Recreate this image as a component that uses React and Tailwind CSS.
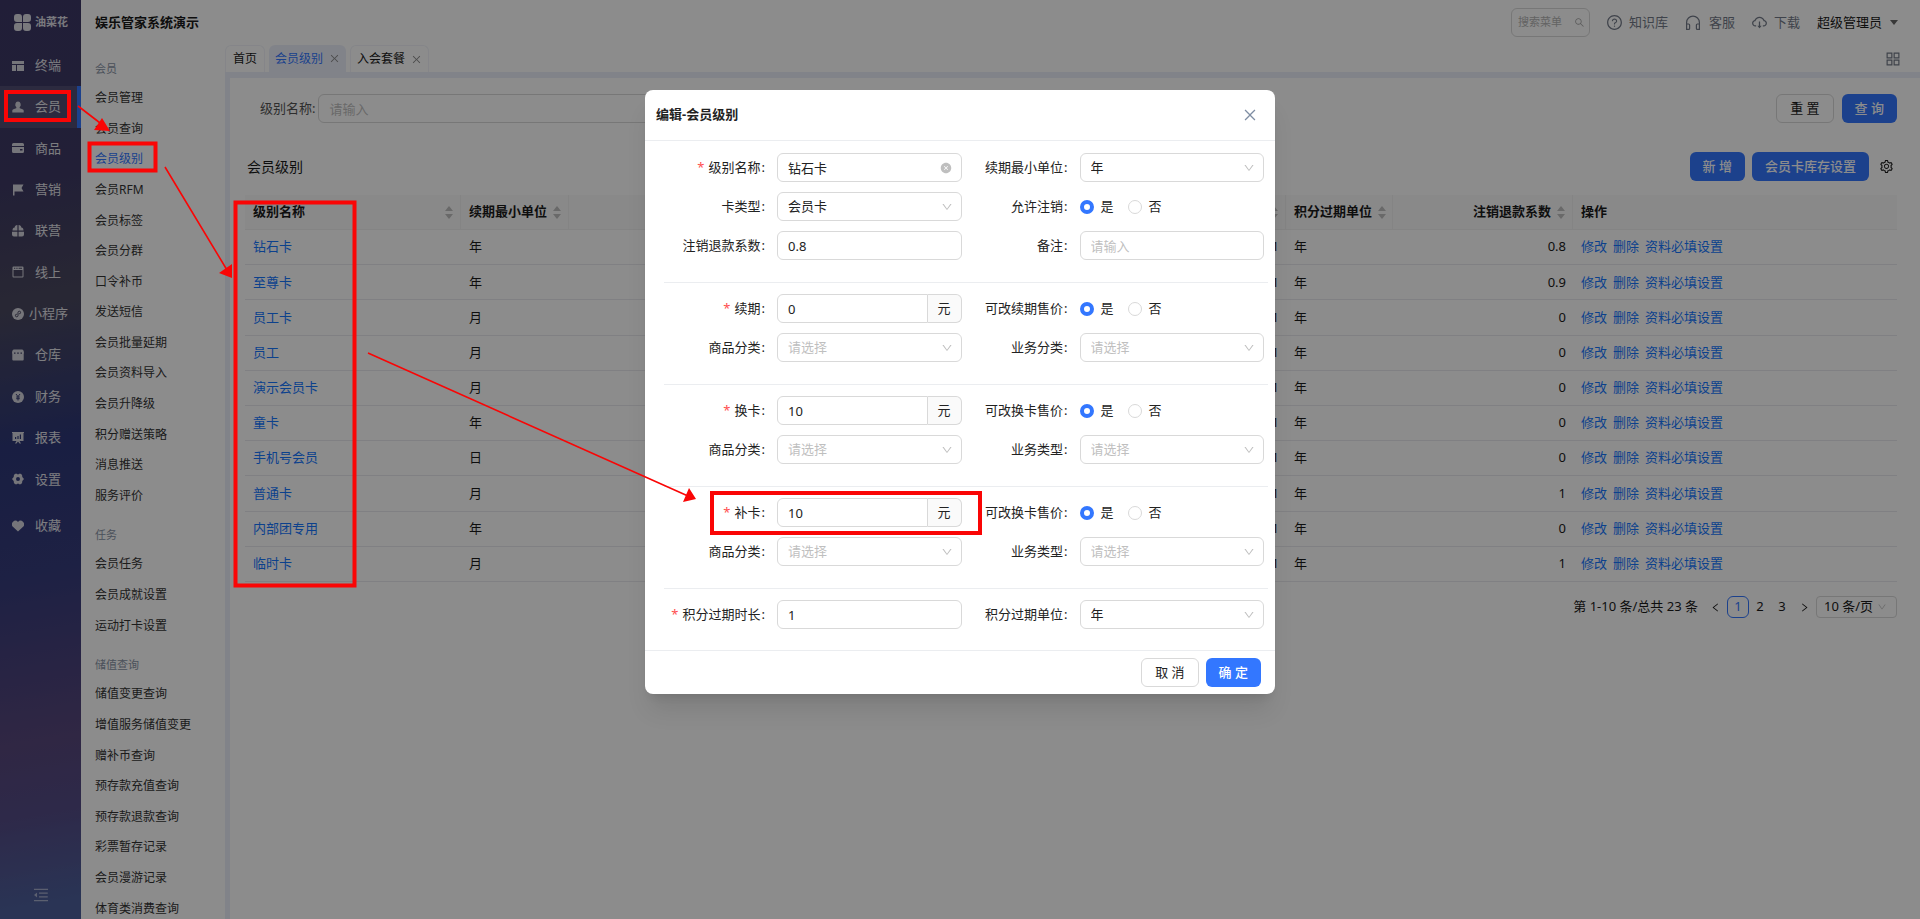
import {
  AiFillCloseCircle,
  AiOutlineAppstore,
  AiOutlineClose,
  AiOutlineCloudDownload,
  AiOutlineDown,
  AiOutlineLeft,
  AiOutlineMenuFold,
  AiOutlineQuestionCircle,
  AiOutlineRight,
  AiOutlineSearch,
  AiOutlineSetting,
} from "react-icons/ai";

const icons = {
  terminal: <path d="M0 1h12v3H0zM0 5h4v6H0zM5 5h7v6H5z" />,
  member: (
    <path d="M6 0.5a2.8 3.2 0 0 1 1.6 5.8l0.2 0.9c2 0.5 3.9 1.1 3.9 2.3v2H0.3v-2c0-1.2 1.9-1.8 3.9-2.3l0.2-0.9A2.8 3.2 0 0 1 6 0.5z" />
  ),
  goods: (
    <path
      fillRule="evenodd"
      d="M1.5 1h9A1.5 1.5 0 0 1 12 2.5V4H0V2.5A1.5 1.5 0 0 1 1.5 1zM0 5h12v4.5A1.5 1.5 0 0 1 10.5 11h-9A1.5 1.5 0 0 1 0 9.5zM8 7v1.5h2.5V7z"
    />
  ),
  flag: <path d="M1 0.5h10.5L9.5 4l2 3.5H2.5v4H1z" />,
  joint: (
    <path d="M5.4 5.5H0.5c0-1.8 0.8-3 2.2-3C2.7 1.2 3.8 0 5.4 0zM6.6 5.5h4.9c0-1.8-0.8-3-2.2-3C9.3 1.2 8.2 0 6.6 0zM0 6.700h5.400v4.800H2A2 2 0 0 1 0 9.500zM12 6.700H6.600v4.800H10a2 2 0 0 0 2-2z" />
  ),
  online: (
    <path
      fillRule="evenodd"
      d="M1.5 0.5h9a1 1 0 0 1 1 1v9a1 1 0 0 1-1 1h-9a1 1 0 0 1-1-1v-9a1 1 0 0 1 1-1zM1.5 4v6.500h9V4zM2 1.700v1h1.300v-1zM4.300 1.700v1h1.300v-1zM6.600 1.700v1h3.400v-1z"
    />
  ),
  mini: (
    <>
      <circle cx="6" cy="6" r="6" />
      <path
        d="M4.8 6.2A1.3 1.3 0 1 0 6 7.600V4.400A1.300 1.300 0 1 1 7.200 5.800"
        fill="none"
        stroke="#45435f"
        strokeWidth="1"
      />
    </>
  ),
  store: (
    <path
      fillRule="evenodd"
      d="M2 0.5h8c1.2 0 2 1.5 2 4H0c0-2.5 0.8-4 2-4zM0.300 4.500h11.400v6a1 1 0 0 1-1 1H1.300a1 1 0 0 1-1-1zM2 3.500v1.200h1.500V3.500zM5.200 3.500v1.200h1.600V3.500zM8.500 3.500v1.200H10V3.500z"
    />
  ),
  finance: (
    <>
      <circle cx="6" cy="6" r="6" />
      <path d="M4 3l2 2.6L8 3M6 5.600V9.500M4.200 6h3.600M4.200 7.700h3.600" fill="none" stroke="#353b70" strokeWidth="1" />
    </>
  ),
  report: (
    <path
      fillRule="evenodd"
      d="M0 0h12v1h-0.5v8H7.500l1.500 2.500H7.600L6 9.500l-1.600 2H3L4.500 9h-4V1H0zM3 5v2h1.200V5zM5.400 4v3h1.200V4zM7.800 2.500V7H9V2.500z"
    />
  ),
  settings: (
    <path
      fillRule="evenodd"
      d="M4 0.5l2 0.9 2-0.9 2 1.3 0.3 2.1L12 6l-1.700 2.100L10 10.200l-2 1.300-2-0.900-2 0.900-2-1.300-0.300-2.100L0 6l1.700-2.100L2 1.800zM6 4a2 2 0 1 0 0 4 2 2 0 0 0 0-4z"
    />
  ),
  heart: <path d="M6 11.5L0.900 6.700A3.300 3.300 0 0 1 6 1.900a3.300 3.300 0 0 1 5.100 4.800z" />,
};

const navItems = [
  ["终端", "terminal"],
  ["会员", "member"],
  ["商品", "goods"],
  ["营销", "flag"],
  ["联营", "joint"],
  ["线上", "online"],
  ["小程序", "mini"],
  ["仓库", "store"],
  ["财务", "finance"],
  ["报表", "report"],
  ["设置", "settings"],
];

const menuGroups = [
  {
    title: "会员",
    height: "h-[428px]",
    items: [
      "会员管理",
      "会员查询",
      "会员级别",
      "会员RFM",
      "会员标签",
      "会员分群",
      "口令补币",
      "发送短信",
      "会员批量延期",
      "会员资料导入",
      "会员升降级",
      "积分赠送策略",
      "消息推送",
      "服务评价",
    ],
  },
  {
    title: "任务",
    height: "h-[92px]",
    items: ["会员任务", "会员成就设置", "运动打卡设置"],
  },
  {
    title: "储值查询",
    height: "h-[245px]",
    items: [
      "储值变更查询",
      "增值服务储值变更",
      "赠补币查询",
      "预存款充值查询",
      "预存款退款查询",
      "彩票暂存记录",
      "会员漫游记录",
      "体育类消费查询",
    ],
  },
];

const rows = [
  ["钻石卡", "年", "0.8"],
  ["至尊卡", "年", "0.9"],
  ["员工卡", "月", "0"],
  ["员工", "月", "0"],
  ["演示会员卡", "月", "0"],
  ["童卡", "年", "0"],
  ["手机号会员", "日", "0"],
  ["普通卡", "月", "1"],
  ["内部团专用", "年", "0"],
  ["临时卡", "月", "1"],
];

const primaryBtn = "h-[29px] rounded-md bg-[#3377ff] px-[13px] font-medium text-white";
const defaultBtn = "h-[29px] rounded-md border border-[#d9d9d9] bg-white px-[13px]";
const fieldBox = "h-[29px] w-full rounded-md border border-[#d9d9d9] bg-white px-[10px] outline-none placeholder:text-[#bfbfbf]";

const NavItem = ({ label, icon, active }) => (
  <a
    href="#"
    className={`flex grow basis-0 items-center pl-3 text-[13px] text-[#e4e4ea] ${
      active ? "border-r-4 border-[#3377ff] bg-white/10" : ""
    } ${label.length > 2 ? "gap-[5px]" : "gap-[11px]"}`}
  >
    <svg viewBox="0 0 12 12" className="size-3 shrink-0" fill="#d6d6de">
      {icons[icon]}
    </svg>
    {label}
  </a>
);

const Sidebar = () => (
  <aside className="flex w-[81px] shrink-0 flex-col bg-[linear-gradient(170deg,#3c3866_0%,#3e3a64_20%,#4a485f_33%,#2e3878_48%,#363c7c_62%,#58477c_80%,#544c86_88%,#4d609c_98%)]">
    <div className="flex h-[45px] items-center gap-1 pl-[14px] text-[11px] font-bold text-[#dcdce4]">
      <svg viewBox="0 0 17 17" className="size-[17px] shrink-0" fill="#dcdce4">
        <path d="M3 0h2a3 3 0 0 1 3 3v5H3a3 3 0 0 1-3-3V3a3 3 0 0 1 3-3zM12 0h2a3 3 0 0 1 3 3v2a3 3 0 0 1-3 3H9V3a3 3 0 0 1 3-3zM3 9h5v5a3 3 0 0 1-3 3H3a3 3 0 0 1-3-3v-2a3 3 0 0 1 3-3zM9 9h5a3 3 0 0 1 3 3v2a3 3 0 0 1-3 3h-2a3 3 0 0 1-3-3z" />
      </svg>
      油菜花
    </div>
    <nav className="flex h-[455px] flex-col">
      {navItems.map(([label, icon]) => (
        <NavItem key={label} label={label} icon={icon} active={label === "会员"} />
      ))}
    </nav>
    <div className="mt-[5px] flex h-[41px]">
      <NavItem label="收藏" icon="heart" />
    </div>
    <button aria-label="收起菜单" className="mt-auto mb-[15px] self-center text-lg text-white/50">
      <AiOutlineMenuFold />
    </button>
  </aside>
);

const SubMenu = () => (
  <nav className="flex w-[144px] shrink-0 flex-col gap-[10px] overflow-hidden pt-[10px] pl-[14px] text-[12px] text-[#333]">
    {menuGroups.map((group) => (
      <section key={group.title}>
        <h2 className="flex h-7 items-center text-[11px] text-[#8a94a6]">{group.title}</h2>
        <ul className={`flex flex-col ${group.height}`}>
          {group.items.map((item) => (
            <li key={item} className="flex grow basis-0 items-center">
              <a href="#" className={item === "会员级别" ? "text-[#3377ff]" : ""}>{item}</a>
            </li>
          ))}
        </ul>
      </section>
    ))}
  </nav>
);

const HeadphoneIcon = () => (
  <svg viewBox="0 0 16 16" className="size-4" fill="none" stroke="currentColor" strokeWidth="1.2">
    <path d="M1.6 14V7.500a6.400 6.400 0 0 1 12.800 0V14M1.600 9h2a1 1 0 0 1 1 1v3.400a1 1 0 0 1-1 1h-2zM14.400 9h-2a1 1 0 0 0-1 1v3.400a1 1 0 0 0 1 1h2z" />
  </svg>
);

const Header = () => (
  <header className="flex h-[45px] shrink-0 items-center pr-[22px] pl-[14px] text-[13px]">
    <h1 className="font-bold">娱乐管家系统演示</h1>
    <div className="ml-auto flex h-[29px] w-[79px] items-center rounded-md border border-[#d9d9d9] pr-1 pl-[6px] text-[#a6a6a6]">
      <input
        aria-label="搜索菜单"
        placeholder="搜索菜单"
        className="w-full min-w-0 text-[11px] outline-none placeholder:text-[#b4b4b4]"
      />
      <AiOutlineSearch className="size-[11px] shrink-0" />
    </div>
    <a href="#" className="ml-4 flex items-center gap-[6px] text-[#747b89]">
      <AiOutlineQuestionCircle className="size-[17px]" />
      知识库
    </a>
    <a href="#" className="ml-[17px] flex items-center gap-2 text-[#747b89]">
      <HeadphoneIcon />
      客服
    </a>
    <a href="#" className="ml-4 flex items-center gap-[6px] text-[#747b89]">
      <AiOutlineCloudDownload className="size-[17px]" />
      下载
    </a>
    <button className="ml-[17px] flex items-center gap-2">
      超级管理员
      <span className="border-x-4 border-t-[5px] border-x-transparent border-t-[#666]" />
    </button>
  </header>
);

const Tabs = () => (
  <div className="flex h-[27px] shrink-0 items-stretch gap-1 pr-[18px] text-[12px]">
    <a href="#" className="flex items-center rounded-t-md border border-b-0 border-[#f2f3f9] px-[7px]">首页</a>
    <div className="flex items-center gap-[6px] rounded-t-md bg-[#eceffa] px-[6px] text-[#3377ff]">
      <a href="#">会员级别</a>
      <button aria-label="关闭会员级别" className="text-[#8a8a8a]"><AiOutlineClose className="size-[11px]" /></button>
    </div>
    <div className="flex items-center gap-[6px] rounded-t-md border border-b-0 border-[#f2f3f9] px-[6px]">
      <a href="#">入会套餐</a>
      <button aria-label="关闭入会套餐" className="text-[#8a8a8a]"><AiOutlineClose className="size-[11px]" /></button>
    </div>
    <button aria-label="全部标签" className="ml-auto text-[#747b89]"><AiOutlineAppstore className="size-[18px]" /></button>
  </div>
);

const Sorter = () => (
  <span className="flex flex-col gap-[3px]">
    <span className="border-x-4 border-b-[5px] border-x-transparent border-b-[#bfbfbf]" />
    <span className="border-x-4 border-t-[5px] border-x-transparent border-t-[#bfbfbf]" />
  </span>
);

const HeadCell = ({ children, align = "justify-between" }) => (
  <th className="h-[35px] border-r border-b border-[#f0f0f0] pr-[7px] pl-2 font-bold">
    <div className={`flex items-center gap-[6px] whitespace-nowrap ${align}`}>
      {children}
      <Sorter />
    </div>
  </th>
);

const LevelTable = () => (
  <table className="mt-[14px] h-[387px] w-full table-fixed border-separate border-spacing-0 text-left text-[13px]">
    <colgroup>
      <col className="w-[216px]" />
      <col className="w-[108px]" />
      <col />
      <col className="w-[107px]" />
      <col className="w-[180px]" />
      <col className="w-[324px]" />
    </colgroup>
    <thead className="bg-[#fafafa]">
      <tr>
        <HeadCell>级别名称</HeadCell>
        <HeadCell>续期最小单位</HeadCell>
        <HeadCell align="justify-end">积分过期时长</HeadCell>
        <HeadCell>积分过期单位</HeadCell>
        <HeadCell align="justify-end">注销退款系数</HeadCell>
        <th className="h-[35px] border-b border-[#f0f0f0] px-2 font-bold">操作</th>
      </tr>
    </thead>
    <tbody>
      {rows.map(([name, unit, ratio]) => (
        <tr key={name} className="[&>td]:border-b [&>td]:border-[#e9eaee] [&>td]:pr-[7px] [&>td]:pl-2">
          <td><a href="#" className="text-[#1677ff]">{name}</a></td>
          <td>{unit}</td>
          <td className="text-right">1</td>
          <td>年</td>
          <td className="text-right">{ratio}</td>
          <td>
            <div className="flex gap-[6px] text-[#1677ff]">
              <a href="#">修改</a>
              <a href="#">删除</a>
              <a href="#">资料必填设置</a>
            </div>
          </td>
        </tr>
      ))}
    </tbody>
  </table>
);

const Pagination = () => (
  <div className="mt-[14px] flex h-[22px] items-center justify-end text-[13px]">
    <span className="mr-3">第 1-10 条/总共 23 条</span>
    <button aria-label="上一页" className="mr-[6px]"><AiOutlineLeft className="size-[11px]" /></button>
    <button className="h-[22px] w-[22px] rounded-md border border-[#3377ff] text-[#3377ff]">1</button>
    <button className="w-[22px]">2</button>
    <button className="w-[22px]">3</button>
    <button aria-label="下一页" className="mx-[6px]"><AiOutlineRight className="size-[11px]" /></button>
    <div className="relative">
      <select aria-label="每页条数" className="h-[22px] w-[81px] appearance-none rounded border border-[#d9d9d9] pl-[7px]">
        <option>10 条/页</option>
      </select>
      <AiOutlineDown className="pointer-events-none absolute top-[6px] right-[10px] size-[10px] text-[#bfbfbf]" />
    </div>
  </div>
);

const Content = () => (
  <main className="grow border-t-[6px] border-l-[5px] border-[#eceffa] pt-4 pr-[23px] pl-[15px]">
    <div className="flex h-[29px] items-center gap-2 pl-[15px] text-[13px]">
      <label htmlFor="levelName" className="-mr-[5px] shrink-0 text-[#555]">级别名称:</label>
      <input
        id="levelName"
        placeholder="请输入"
        className="h-[29px] w-1/3 rounded-md border border-[#d9d9d9] px-[10px] outline-none placeholder:text-[#bfbfbf]"
      />
      <button className={`ml-auto ${defaultBtn}`}>重 置</button>
      <button className={primaryBtn}>查 询</button>
    </div>
    <div className="mt-[29px] flex items-center gap-[7px] pl-[2px] text-[13px]">
      <h2 className="mr-auto text-[14px]">会员级别</h2>
      <button className={primaryBtn}>新 增</button>
      <button className={primaryBtn}>会员卡库存设置</button>
      <button aria-label="列设置" className="mr-px w-5"><AiOutlineSetting className="mx-auto size-[15px]" /></button>
    </div>
    <LevelTable />
    <Pagination />
  </main>
);

const Field = ({ id, label, required, children }) => (
  <>
    <label htmlFor={id} className="pr-3 text-right">
      {required && <span className="mr-1 text-[#ff4d4f]">*</span>}
      {label}
      <span className="ml-px">:</span>
    </label>
    <div className="relative flex items-center">{children}</div>
  </>
);

const TextField = ({ id, label, required, value, suffix, clearable }) => (
  <Field id={id} label={label} required={required}>
    <input
      id={id}
      defaultValue={value}
      placeholder="请输入"
      className={suffix ? `${fieldBox} rounded-r-none` : fieldBox}
    />
    {suffix && (
      <span className="flex h-[29px] w-[34px] shrink-0 items-center justify-center rounded-r-md border border-l-0 border-[#d9d9d9] bg-[#fafafa]">
        {suffix}
      </span>
    )}
    {clearable && (
      <button type="button" aria-label="清除" className="absolute right-[10px] text-[#bfbfbf]">
        <AiFillCloseCircle className="size-3" />
      </button>
    )}
  </Field>
);

const SelectField = ({ id, label, value }) => (
  <Field id={id} label={label}>
    <select id={id} className={`${fieldBox} appearance-none ${value ? "" : "text-[#bfbfbf]"}`}>
      <option>{value || "请选择"}</option>
    </select>
    <AiOutlineDown className="pointer-events-none absolute right-[9px] size-3 text-[#bfbfbf]" />
  </Field>
);

const RadioField = ({ id, label }) => (
  <Field id={id} label={label}>
    {["是", "否"].map((text, i) => (
      <label key={text} className="mr-[14px] flex items-center gap-[7px]">
        <input
          type="radio"
          id={i === 0 ? id : undefined}
          name={id}
          defaultChecked={i === 0}
          className="size-[14px] appearance-none rounded-full border border-[#d9d9d9] bg-white checked:border-[4px] checked:border-[#3377ff]"
        />
        {text}
      </label>
    ))}
  </Field>
);

const FieldGrid = ({ children }) => (
  <div className="grid grid-cols-[132px_1fr_118px_1fr] items-center gap-y-[10px] pr-[11px]">{children}</div>
);

const Divider = () => <hr className="mt-[22px] mr-[7px] mb-[11px] ml-[19px] border-[#ebedf0]" />;

const EditDialog = () => (
  <div
    role="dialog"
    aria-labelledby="dialogTitle"
    className="w-[630px] rounded-lg bg-white text-[13px] text-[#222] shadow-xl"
  >
    <div className="flex h-[51px] items-center justify-between border-b border-[#ebedf0] pr-[17px] pl-[11px]">
      <h2 id="dialogTitle" className="font-bold">编辑-会员级别</h2>
      <button aria-label="关闭" className="text-[#7f8ea3]"><AiOutlineClose className="size-4" /></button>
    </div>
    <form className="pt-3 pb-[21px]">
      <FieldGrid>
        <TextField id="name" label="级别名称" required value="钻石卡" clearable />
        <SelectField id="renewUnit" label="续期最小单位" value="年" />
        <SelectField id="cardType" label="卡类型" value="会员卡" />
        <RadioField id="allowCancel" label="允许注销" />
        <TextField id="refundRatio" label="注销退款系数" value="0.8" />
        <TextField id="remark" label="备注" />
      </FieldGrid>
      <Divider />
      <FieldGrid>
        <TextField id="renewFee" label="续期" required value="0" suffix="元" />
        <RadioField id="renewEditable" label="可改续期售价" />
        <SelectField id="renewGoods" label="商品分类" />
        <SelectField id="renewBiz" label="业务分类" />
      </FieldGrid>
      <Divider />
      <FieldGrid>
        <TextField id="changeFee" label="换卡" required value="10" suffix="元" />
        <RadioField id="changeEditable" label="可改换卡售价" />
        <SelectField id="changeGoods" label="商品分类" />
        <SelectField id="changeBiz" label="业务类型" />
      </FieldGrid>
      <Divider />
      <FieldGrid>
        <TextField id="reissueFee" label="补卡" required value="10" suffix="元" />
        <RadioField id="reissueEditable" label="可改换卡售价" />
        <SelectField id="reissueGoods" label="商品分类" />
        <SelectField id="reissueBiz" label="业务类型" />
      </FieldGrid>
      <Divider />
      <FieldGrid>
        <TextField id="expire" label="积分过期时长" required value="1" />
        <SelectField id="expireUnit" label="积分过期单位" value="年" />
      </FieldGrid>
    </form>
    <div className="flex justify-end gap-[7px] border-t border-[#ebedf0] pt-[7px] pr-[14px] pb-[7px]">
      <button className={defaultBtn}>取 消</button>
      <button className={primaryBtn}>确 定</button>
    </div>
  </div>
);

// Tutorial marks drawn over the page: frames and arrows
const Annotations = () => (
  <svg className="pointer-events-none absolute top-0 left-0 h-[919px] w-[1920px]" fill="none" stroke="#fa0505">
    <g strokeWidth="4">
      <rect x="6" y="92" width="63" height="28" />
      <rect x="89.5" y="143.5" width="66" height="27" />
      <rect x="235.5" y="202.5" width="119" height="383" />
      <rect x="712" y="493" width="268" height="40" />
    </g>
    <path strokeWidth="1.6" d="M78 106L104 126M165 167L227 270M368 353L688 496" />
    <path fill="#fa0505" stroke="none" d="M110 131L102 118L94 130zM232 278L232 264L219 273zM696 499L689 488L683 502z" />
  </svg>
);

const App = () => (
  <div className="relative h-screen overflow-hidden bg-white font-['Noto_Sans','Noto_Sans_CJK_SC',sans-serif] text-[#1a1a1a]">
    <div className="flex h-full">
      <Sidebar />
      <div className="flex min-w-0 grow flex-col">
        <Header />
        <div className="flex min-h-0 grow">
          <SubMenu />
          <div className="flex min-w-0 grow flex-col">
            <Tabs />
            <Content />
          </div>
        </div>
      </div>
    </div>
    <div className="absolute inset-0 flex items-start justify-center bg-black/45 pt-[90px]">
      <EditDialog />
    </div>
    <Annotations />
  </div>
);

export default App;
